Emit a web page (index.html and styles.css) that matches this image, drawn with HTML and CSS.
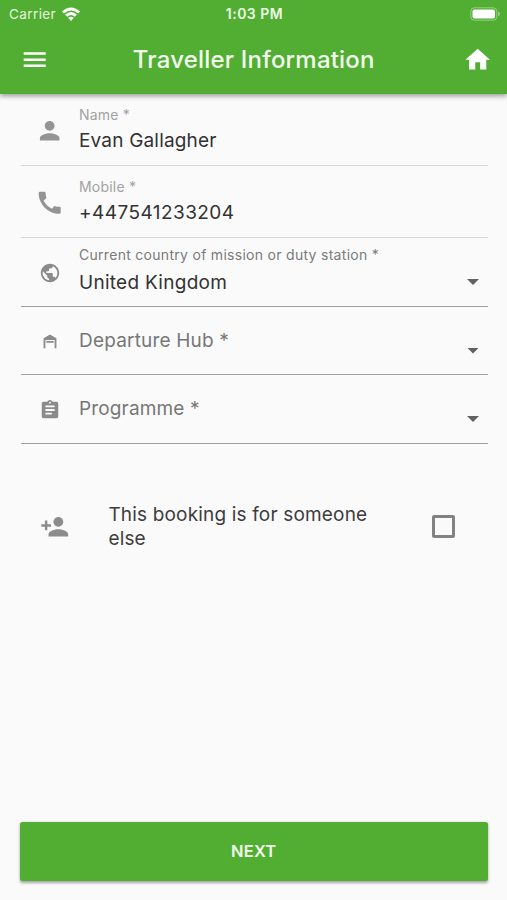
FILE: index.html
```html
<!DOCTYPE html>
<html lang="en">
<head>
<meta charset="utf-8">
<title>Traveller Information</title>
<link rel="stylesheet" href="styles.css">
</head>
<body>
<header class="header">
  <div class="status">
    <div class="carrier"><span>Carrier</span>
      <svg class="wifi" viewBox="0 0 18 14"><path d="M0 4.500Q9-3.700 18 4.500L16 6.600Q9 .3 2 6.600Z"/><path d="M3.100 7.600Q9 2.400 14.900 7.600L12.900 9.700Q9 6.400 5.100 9.700Z"/><path d="M6.100 10.800Q9 8.500 11.900 10.800L9 13.900Z"/></svg>
    </div>
    <time class="clock">1:03 PM</time>
    <svg class="battery" viewBox="0 0 30 14"><rect class="shell" x=".8" y=".8" width="26" height="12.400" rx="3.500"/><rect x="2.500" y="2.500" width="22.500" height="9" rx="2"/><path class="tip" d="M28 4.700q2 .6 2 2.300t-2 2.300z"/></svg>
  </div>
  <div class="toolbar">
    <svg class="icon" viewBox="0 0 24 24"><path d="M3 18h18v-2H3v2zm0-5h18v-2H3v2zm0-7v2h18V6H3z"/></svg>
    <h1 class="title">Traveller Information</h1>
    <svg class="icon" viewBox="0 0 24 24"><path d="M10 20v-6h4v6h5v-8h3L12 3 2 12h3v8z"/></svg>
  </div>
</header>
<main class="form">
  <div class="field input">
    <div class="lead"><svg class="icon" viewBox="0 0 24 24"><path d="M12 12c2.210 0 4-1.790 4-4s-1.790-4-4-4-4 1.790-4 4 1.790 4 4 4zm0 2c-2.670 0-8 1.340-8 4v2h16v-2c0-2.660-5.330-4-8-4z"/></svg></div>
    <div class="text"><label class="label">Name *</label><span class="value name">Evan Gallagher</span></div>
  </div>
  <div class="field input">
    <div class="lead"><svg class="icon" viewBox="0 0 24 24"><path d="M20.010 15.380c-1.230 0-2.420-.2-3.530-.56-.35-.12-.74-.03-1.010.24l-1.570 1.970c-2.830-1.350-5.480-3.900-6.890-6.830l1.950-1.660c.27-.28.35-.67.24-1.020-.37-1.110-.56-2.300-.56-3.530 0-.54-.45-.99-.99-.99H4.190C3.650 3 3 3.240 3 3.990 3 13.280 10.730 21 20.010 21c.71 0 .99-.63.99-1.180v-3.450c0-.54-.45-.99-.99-.99z"/></svg></div>
    <div class="text"><label class="label">Mobile *</label><span class="value phone">+447541233204</span></div>
  </div>
  <div class="field select filled">
    <div class="lead"><svg class="icon small" viewBox="0 0 24 24"><path d="M12 2C6.480 2 2 6.480 2 12s4.480 10 10 10 10-4.480 10-10S17.520 2 12 2zm-1 17.930c-3.950-.49-7-3.850-7-7.930 0-.62.080-1.210.21-1.790L9 15v1c0 1.100.9 2 2 2v1.930zm6.900-2.540c-.26-.81-1-1.390-1.900-1.390h-1v-3c0-.55-.45-1-1-1H8v-2h2c.55 0 1-.45 1-1V7h2c1.100 0 2-.9 2-2v-.41c2.930 1.190 5 4.060 5 7.410 0 2.080-.8 3.970-2.100 5.390z"/></svg></div>
    <div class="text"><label class="label">Current country of mission or duty station *</label><span class="value country">United Kingdom</span></div>
    <i class="caret"></i>
  </div>
  <div class="field select">
    <div class="lead"><svg class="icon small" viewBox="0 0 24 24"><path d="M19 20h-2v-9H7v9H5V9l7-4 7 4v11M8 12h8v2H8v-2"/></svg></div>
    <div class="text"><span class="value hub">Departure Hub *</span></div>
    <i class="caret"></i>
  </div>
  <div class="field select">
    <div class="lead"><svg class="icon small" viewBox="0 0 24 24"><path d="M19 3h-4.180C14.400 1.840 13.300 1 12 1c-1.300 0-2.400.84-2.820 2H5c-1.100 0-2 .9-2 2v14c0 1.100.9 2 2 2h14c1.100 0 2-.9 2-2V5c0-1.100-.9-2-2-2zm-7 0c.55 0 1 .45 1 1s-.45 1-1 1-1-.45-1-1 .45-1 1-1zm2 14H7v-2h7v2zm3-4H7v-2h10v2zm0-4H7V7h10v2z"/></svg></div>
    <div class="text"><span class="value programme">Programme *</span></div>
    <i class="caret"></i>
  </div>
  <div class="booking">
    <svg class="icon" viewBox="0 0 24 24"><path d="M15 12c2.210 0 4-1.790 4-4s-1.790-4-4-4-4 1.790-4 4 1.790 4 4 4zm-9-2V7H4v3H1v2h3v3h2v-3h3v-2H6zm9 4c-2.670 0-8 1.340-8 4v2h16v-2c0-2.660-5.330-4-8-4z"/></svg>
    <p class="question">This booking is for someone else</p>
    <span class="checkbox" role="checkbox" aria-checked="false"></span>
  </div>
</main>
<footer class="footer"><button class="next">NEXT</button></footer>
</body>
</html>
```
FILE: styles.css
```css
* { box-sizing: border-box; }
body {
  margin: 0;
  height: 900px;
  display: flex;
  flex-direction: column;
  background: #fafafa;
  font-family: Inter, "Liberation Sans", sans-serif;
  color: #323232;
  overflow: hidden;
}
svg { display: block; fill: currentColor; }
.icon { width: 29.4px; height: 29.4px; flex: none; }
.icon.small { width: 22px; height: 22px; }

.header {
  height: 94px;
  flex: none;
  background: #52ae32;
  color: #fff;
  box-shadow: 0 2px 5px rgba(0, 0, 0, .4);
}
.status {
  height: 27px;
  padding: 0 7px 0 9px;
  display: grid;
  grid-template-columns: 1fr auto 1fr;
  align-items: center;
  font-size: 13.5px;
}
.carrier { display: flex; align-items: center; gap: 6px; color: #e6f5df; letter-spacing: .4px; }
.wifi { width: 18px; height: 14px; color: #fff; }
.clock { font-weight: 600; font-size: 14px; letter-spacing: .5px; color: #eefae9; }
.battery { width: 30px; height: 14px; justify-self: end; }
.shell { fill: none; stroke: #fff; stroke-opacity: .4; }
.tip { fill-opacity: .4; }
.toolbar {
  height: 65.500px;
  padding: 0 14.500px 0 20px;
  display: flex;
  align-items: center;
}
.title {
  flex: 1;
  margin: 0 5px 0 0;
  text-align: center;
  font-size: 24px;
  font-weight: 500;
  line-height: 30px;
  letter-spacing: .2px;
  color: #f2fcee;
}

.form { flex: 1; padding: 0 19.500px 0 20.500px; }
.field { display: flex; }
.lead { width: 58.500px; display: flex; justify-content: center; align-items: center; flex: none; padding-top: 2px; color: #949494; }
.text { flex: 1; display: flex; flex-direction: column; white-space: nowrap; }
.label { font-size: 14px; line-height: 18px; letter-spacing: .2px; color: #a2a2a2; }
.value { font-size: 19px; line-height: 26px; }
.name, .hub { letter-spacing: .18px; }
.phone { letter-spacing: .44px; }
.country { letter-spacing: .28px; }
.programme { letter-spacing: .15px; }
.input { height: 72px; border-bottom: 1px solid #d8d8d8; }
.input .text { padding-top: 12px; }
.input .value { margin-top: 4px; }
.select { height: 68.500px; border-bottom: 1px solid #a0a0a0; color: #777; }
.select .lead { color: #8b8b8b; }
.select .text { padding-top: 21px; }
.filled .text { padding-top: 8px; }
.filled .label { letter-spacing: .29px; color: #7b7b7b; }
.filled .value { margin-top: 6px; color: #323232; }
.caret {
  margin: 41px 8.500px 0 0;
  width: 12px;
  height: 6px;
  background: #616161;
  clip-path: polygon(0 0, 100% 0, 50% 100%);
}
.booking { margin: 59.500px 13px 0 19.500px; display: flex; align-items: center; color: #8c8c8c; }
.question { margin: 0 0 0 39px; width: 280px; font-size: 19px; line-height: 23.500px; letter-spacing: .17px; color: #3d3d3d; }
.checkbox { margin: 0 20px 1px auto; width: 23px; height: 23px; border: 3px solid #828282; border-radius: 2px; }

.footer { flex: none; padding: 0 19.500px 19.500px 20px; }
.next {
  display: block;
  width: 100%;
  height: 58.500px;
  border: 0;
  border-radius: 2.500px;
  background: #52ae32;
  color: #f2fcee;
  font: 600 16.5px/20px Inter, "Liberation Sans", sans-serif;
  letter-spacing: .2px;
  box-shadow: 0 1.500px 3px rgba(0, 0, 0, .35);
}
```
